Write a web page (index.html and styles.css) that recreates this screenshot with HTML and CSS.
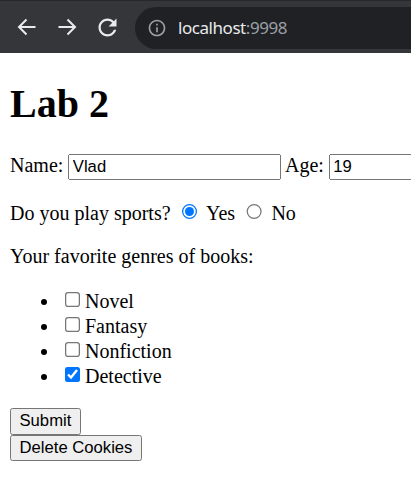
FILE: index.html
```html
<!DOCTYPE html>
<html lang="en">
<head>
<meta charset="utf-8">
<title>Lab 2</title>
<link rel="stylesheet" href="styles.css">
</head>
<body>
<header class="toolbar">
  <div class="nav">
    <span class="nav-btn">
      <svg class="arrow" width="20" height="20" viewBox="0 0 20 20"><path d="M18.5 10H2M9.5 2.5L2 10l7.5 7.5"/></svg>
    </span>
    <span class="nav-btn">
      <svg class="arrow" width="20" height="20" viewBox="0 0 20 20"><path d="M1.5 10H18M10.5 2.5L18 10l-7.5 7.5"/></svg>
    </span>
    <span class="nav-btn">
      <svg class="reload" width="27" height="27" viewBox="0 0 24 24"><path d="M17.65 6.35C16.2 4.9 14.21 4 12 4c-4.42 0-7.990 3.58-7.990 8s3.57 8 7.990 8c3.73 0 6.84-2.55 7.73-6h-2.08c-.82 2.33-3.04 4-5.65 4-3.31 0-6-2.69-6-6s2.69-6 6-6c1.66 0 3.14.69 4.22 1.78L13 11h7V4l-2.35 2.35z"/></svg>
    </span>
  </div>
  <div class="omnibox">
    <svg class="info" width="20" height="20" viewBox="0 0 24 24"><path d="M11 7h2v2h-2zm0 4h2v6h-2zm1-9C6.48 2 2 6.48 2 12s4.48 10 10 10 10-4.48 10-10S17.52 2 12 2zm0 18c-4.41 0-8-3.59-8-8s3.59-8 8-8 8 3.59 8 8-3.59 8-8 8z"/></svg>
    <span class="url"><span class="host">localhost</span><span class="port">:9998</span></span>
  </div>
</header>
<main class="page">
  <h1 class="title">Lab 2</h1>
  <form class="lab-form">
    <p class="row">Name: <input class="field" type="text" value="Vlad"> Age: <input class="field" type="text" value="19"></p>
    <p class="row">Do you play sports? <input type="radio" name="sport" checked> Yes <input type="radio" name="sport"> No</p>
    <p class="row">Your favorite genres of books:</p>
    <ul class="genres">
      <li><input type="checkbox">Novel</li>
      <li><input type="checkbox">Fantasy</li>
      <li><input type="checkbox">Nonfiction</li>
      <li><input type="checkbox" checked>Detective</li>
    </ul>
    <button class="btn" type="button">Submit</button><br>
    <button class="btn" type="button">Delete Cookies</button>
  </form>
</main>
</body>
</html>
```
FILE: styles.css
```css
html, body {
  margin: 0;
  padding: 0;
  background: #ffffff;
  overflow: hidden;
}

.toolbar {
  display: flex;
  align-items: center;
  height: 52px;
  background: #35363a;
  border-top: 1px solid #26272a;
  margin-bottom: 1px;
}

.nav {
  display: flex;
  padding-left: 7px;
}

.nav-btn {
  width: 40px;
  height: 40px;
  display: flex;
  align-items: center;
  justify-content: center;
}

.arrow {
  fill: none;
  stroke: #e8eaed;
  stroke-width: 2;
}

.reload {
  fill: #e8eaed;
}

.omnibox {
  flex: 1;
  margin-left: 8px;
  height: 42px;
  margin-top: 1px;
  background: #202124;
  border-radius: 21px 0 0 21px;
  display: flex;
  align-items: center;
  padding-left: 12px;
}

.info {
  fill: #9aa0a6;
  flex: none;
}

.url {
  margin-left: 11px;
  font-family: "Noto Sans", "Open Sans", sans-serif;
  font-size: 17px;
  letter-spacing: -0.45px;
}

.host { color: #e8eaed; }
.port { color: #9aa0a6; }

.page {
  zoom: 1.25;
  margin: 8px;
  font-family: "Liberation Serif", "Times New Roman", serif;
  font-size: 16px;
  color: #000;
}

.title {
  font-size: 2em;
  font-weight: bold;
  margin: 0.67em 0;
}

.row {
  margin: 1em 0;
  white-space: nowrap;
}

.field, .btn {
  font-family: "Liberation Sans", Arial, sans-serif;
  font-size: 13.333px;
}

.field {
  width: 163px;
}

.genres {
  margin: 1em 0;
  padding-left: 40px;
}
```
